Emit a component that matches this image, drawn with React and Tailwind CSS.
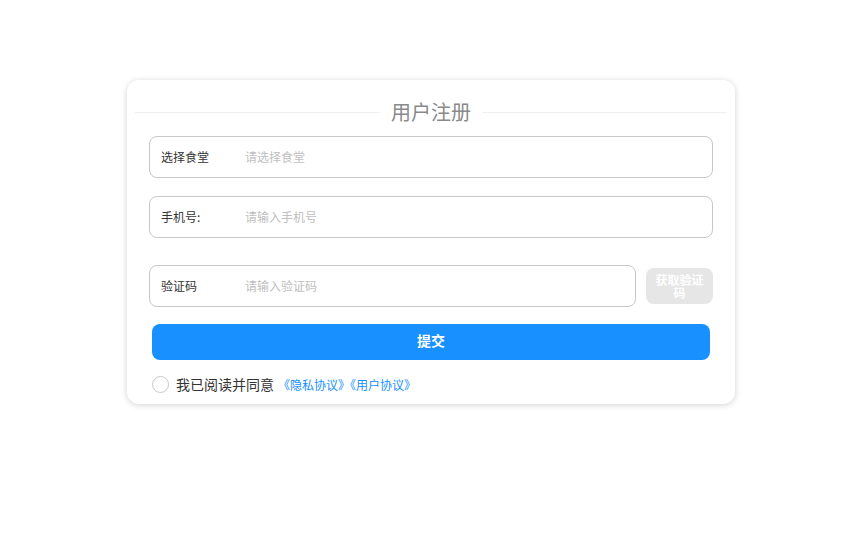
export default function App() {
  const font = { fontFamily: '"Noto Sans CJK SC", "Noto Sans", sans-serif' };
  return (
    <div className="min-h-[542px] w-full bg-white pt-[80px]" style={font}>
      <div className="ml-[127px] w-[608px] rounded-[12px] bg-white shadow-[0_1px_6px_rgba(0,0,0,0.18)] px-[22px] pt-[20px] pb-[9px]">
        {/* title */}
        <div className="-mx-[14px] flex items-center gap-[11px]">
          <div className="h-px flex-1 bg-[#f0f0f0]" />
          <span className="text-[20px] leading-[24px] text-[#8a8a8a]">用户注册</span>
          <div className="h-px flex-1 bg-[#f0f0f0]" />
        </div>

        <div className="mt-[12px] flex h-[42px] items-center rounded-[8px] border border-[#c8c8c8] px-[11px]">
          <span className="w-[84px] text-[12px] text-[#333]">选择食堂</span>
          <span className="text-[12px] text-[#c0c0c0]">请选择食堂</span>
        </div>

        <div className="mt-[18px] flex h-[42px] items-center rounded-[8px] border border-[#c8c8c8] px-[11px]">
          <span className="w-[84px] text-[12px] text-[#333]">手机号:</span>
          <span className="text-[12px] text-[#c0c0c0]">请输入手机号</span>
        </div>

        <div className="mt-[27px] flex items-center gap-[10px]">
          <div className="flex h-[42px] flex-1 items-center rounded-[8px] border border-[#c8c8c8] px-[11px]">
            <span className="w-[84px] text-[12px] text-[#333]">验证码</span>
            <span className="text-[12px] text-[#c0c0c0]">请输入验证码</span>
          </div>
          <button className="flex h-[36px] w-[67px] items-center justify-center rounded-[8px] bg-[#e6e6e6] px-[8px] text-center text-[12px] font-bold leading-[13px] text-white">
            获取验证码
          </button>
        </div>

        <button className="mx-[3px] mt-[17px] flex h-[36px] w-[558px] items-center justify-center rounded-[8px] bg-[#1890ff] pb-[3px] text-[14px] font-bold text-white">
          提交
        </button>

        <div className="ml-[3px] mt-[14px] flex items-center">
          <span className="h-[17px] w-[17px] rounded-full border border-[#c8c8c8]" />
          <span className="ml-[7px] text-[14px] text-[#333]">我已阅读并同意</span>
          <span className="ml-[4px] text-[12px] text-[#1890ff]">《隐私协议》《用户协议》</span>
        </div>
      </div>
    </div>
  );
}
